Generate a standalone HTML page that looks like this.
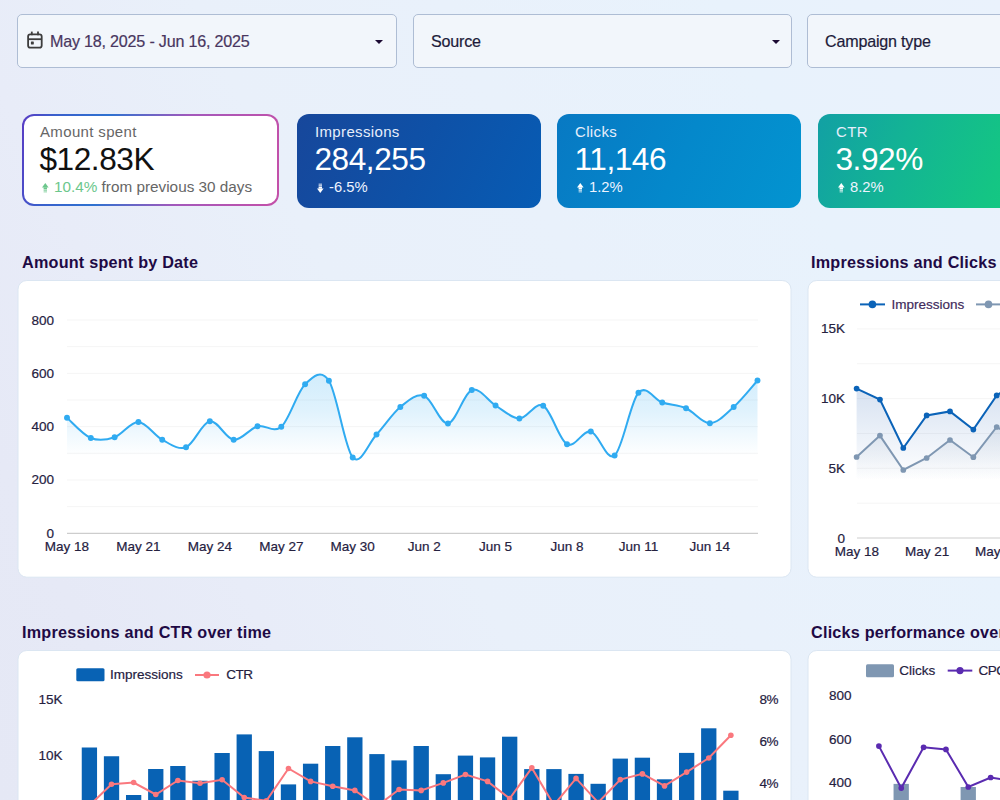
<!DOCTYPE html>
<html><head><meta charset="utf-8"><title>Dashboard</title>
<style>
*{box-sizing:border-box;margin:0;padding:0}
html,body{width:1000px;height:800px;overflow:hidden}
body{font-family:"Liberation Sans",sans-serif;position:relative;
 background:linear-gradient(64deg,#e5e8f5 0%,#e6e9f6 12%,#e8ecf8 25%,#e9f0fa 42%,#e9f1fb 60%,#e8f2fc 80%,#eaf2fc 100%);}
.abs{position:absolute}
.filter{position:absolute;top:14px;height:54px;background:#f2f6fb;border:1px solid #aebdd4;border-radius:5px;
 font-size:16.1px;letter-spacing:-.2px;color:#1d1b3a;line-height:52px;white-space:nowrap;-webkit-text-stroke:.2px}
.filter .caret{position:absolute;top:24.5px;width:0;height:0;border-left:4px solid transparent;border-right:4px solid transparent;border-top:4px solid #1c0a33}
.kpi{position:absolute;top:114px;height:93.5px;border-radius:12px;color:#fff;white-space:nowrap}
.kpi .l{position:absolute;left:18px;top:8.8px;font-size:15px;letter-spacing:.35px;line-height:18px;color:#e6eefb}
.kpi .v{position:absolute;left:17.5px;top:26px;font-size:31.6px;line-height:38px;letter-spacing:-.45px}
.kpi .d{position:absolute;left:18px;top:63.5px;font-size:14.8px;line-height:18px;color:#eef4ff}
.title{position:absolute;font-weight:bold;font-size:16.2px;letter-spacing:.22px;color:#1e0a45;white-space:nowrap;line-height:20px}
.card{position:absolute;background:#fff;border-radius:11px;border:1px solid #dbe6f2}
svg{position:absolute;left:0;top:0}
svg.ar{position:static;display:inline-block;margin:0 5.5px 0 1.5px;vertical-align:-1px}
svg text{font-family:"Liberation Sans",sans-serif;font-size:13.5px;fill:#25213f;stroke:#25213f;stroke-width:.2px}
</style></head><body>

<!-- filters -->
<div class="filter" style="left:17px;width:380px">
  <svg width="20" height="22" viewBox="0 0 20 22" style="left:8px;top:15px" fill="none" stroke="#3d3d3d" stroke-width="1.8">
    <rect x="2.1" y="4.3" width="13.6" height="13.3" rx="2.2"/><line x1="2.1" y1="9.2" x2="15.7" y2="9.2"/>
    <line x1="5.8" y1="1.6" x2="5.8" y2="5.2"/><line x1="12" y1="1.6" x2="12" y2="5.2"/><rect x="4.9" y="11.6" width="2.9" height="2.9" rx=".4" fill="#3d3d3d" stroke="none"/>
  </svg>
  <span class="abs" style="left:32px;color:#49365f">May 18, 2025 - Jun 16, 2025</span>
  <i class="caret" style="left:357px"></i>
</div>
<div class="filter" style="left:413px;width:379px"><span class="abs" style="left:17px">Source</span><i class="caret" style="left:358px"></i></div>
<div class="filter" style="left:807px;width:379px"><span class="abs" style="left:17px">Campaign type</span></div>

<!-- KPI cards -->
<div class="kpi" style="left:22px;width:257px;height:92px;background:linear-gradient(100deg,#5a3cc4 0%,#3a5fcc 12%,#2e72d0 32%,#a458bb 62%,#c450a8 100%);padding:2px">
  <div style="width:100%;height:100%;background:#fff;border-radius:10px"></div>
  <div class="l" style="color:#666">Amount spent</div>
  <div class="v" style="color:#111">$12.83K</div>
  <div class="d" style="color:#666;font-size:15.3px"><svg class="ar" width="7" height="10" viewBox="0 0 7 10"><path d="M3.3 0 L6.6 4.4 L0 4.4 Z" fill="#6cc78c"/><rect x="1.6" y="4.4" width="3.4" height="2" fill="#6cc78c"/><rect x="1.6" y="6.8" width="3.4" height="1" fill="#6cc78c" opacity=".8"/><rect x="1.6" y="8.2" width="3.4" height=".9" fill="#6cc78c" opacity=".6"/><rect x="1.6" y="9.4" width="3.4" height=".6" fill="#6cc78c" opacity=".4"/></svg><span style="color:#6cc78c">10.4%</span> from previous 30 days</div>
</div>
<div class="kpi" style="left:297px;width:244px;background:linear-gradient(115deg,#17479b 0%,#0e51a7 50%,#075cb4 100%)">
  <div class="l">Impressions</div><div class="v">284,255</div><div class="d"><svg class="ar" width="7" height="10" viewBox="0 0 7 10"><path d="M3.3 10 L6.6 5.6 L0 5.6 Z" fill="#fff"/><rect x="1.6" y="3.6" width="3.4" height="2" fill="#fff"/><rect x="1.6" y="2.2" width="3.4" height="1" fill="#fff" opacity=".85"/><rect x="1.6" y="0.9" width="3.4" height=".9" fill="#fff" opacity=".7"/><rect x="1.6" y="0" width="3.4" height=".5" fill="#fff" opacity=".5"/></svg>-6.5%</div></div>
<div class="kpi" style="left:557px;width:244px;background:linear-gradient(115deg,#0879c3 0%,#0488cb 50%,#0394d0 100%)">
  <div class="l">Clicks</div><div class="v">11,146</div><div class="d"><svg class="ar" width="7" height="10" viewBox="0 0 7 10"><path d="M3.3 0 L6.6 4.4 L0 4.4 Z" fill="#fff"/><rect x="1.6" y="4.4" width="3.4" height="2" fill="#fff"/><rect x="1.6" y="6.8" width="3.4" height="1" fill="#fff" opacity=".8"/><rect x="1.6" y="8.2" width="3.4" height=".9" fill="#fff" opacity=".6"/><rect x="1.6" y="9.4" width="3.4" height=".6" fill="#fff" opacity=".4"/></svg>1.2%</div></div>
<div class="kpi" style="left:818px;width:244px;background:linear-gradient(112deg,#12a0a4 0%,#13b494 35%,#14c584 72%,#16cf7e 100%)">
  <div class="l">CTR</div><div class="v">3.92%</div><div class="d"><svg class="ar" width="7" height="10" viewBox="0 0 7 10"><path d="M3.3 0 L6.6 4.4 L0 4.4 Z" fill="#fff"/><rect x="1.6" y="4.4" width="3.4" height="2" fill="#fff"/><rect x="1.6" y="6.8" width="3.4" height="1" fill="#fff" opacity=".8"/><rect x="1.6" y="8.2" width="3.4" height=".9" fill="#fff" opacity=".6"/><rect x="1.6" y="9.4" width="3.4" height=".6" fill="#fff" opacity=".4"/></svg>8.2%</div></div>

<!-- titles -->
<div class="title" style="left:22px;top:251.5px">Amount spent by Date</div>
<div class="title" style="left:811px;top:251.5px">Impressions and Clicks over time</div>
<div class="title" style="left:22px;top:621.5px">Impressions and CTR over time</div>
<div class="title" style="left:811px;top:621.5px">Clicks performance over time</div>

<!-- cards -->

<svg width="1000" height="800" viewBox="0 0 1000 800">
<defs>
 <linearGradient id="g1" x1="0" y1="374" x2="0" y2="456" gradientUnits="userSpaceOnUse">
  <stop offset="0" stop-color="#30abf1" stop-opacity=".22"/><stop offset=".45" stop-color="#30abf1" stop-opacity=".15"/><stop offset="1" stop-color="#30abf1" stop-opacity="0"/></linearGradient>
 <linearGradient id="g2" x1="0" y1="380" x2="0" y2="480" gradientUnits="userSpaceOnUse">
  <stop offset="0" stop-color="#2460b4" stop-opacity=".2"/><stop offset="1" stop-color="#2460b4" stop-opacity="0"/></linearGradient>
 <linearGradient id="g3" x1="0" y1="427" x2="0" y2="480" gradientUnits="userSpaceOnUse">
  <stop offset="0" stop-color="#7f97b2" stop-opacity=".16"/><stop offset="1" stop-color="#7f97b2" stop-opacity="0"/></linearGradient>
</defs>

<g fill="#fff" stroke="#dbe6f2" stroke-width="1">
<rect x="18" y="280.5" width="773" height="296.7" rx="8.8"/>
<rect x="808" y="280.5" width="773" height="296.7" rx="8.8"/>
<rect x="18" y="650.5" width="773" height="296.7" rx="8.8"/>
<rect x="808" y="650.5" width="773" height="296.7" rx="8.8"/>
</g>

<!-- chart 1 -->
<g stroke="#f5f5f5" stroke-width="1"><line x1="67" x2="758" y1="506.64" y2="506.64"/><line x1="67" x2="758" y1="479.98" y2="479.98"/><line x1="67" x2="758" y1="453.32" y2="453.32"/><line x1="67" x2="758" y1="426.66" y2="426.66"/><line x1="67" x2="758" y1="400.00" y2="400.00"/><line x1="67" x2="758" y1="373.34" y2="373.34"/><line x1="67" x2="758" y1="346.68" y2="346.68"/><line x1="67" x2="758" y1="320.02" y2="320.02"/></g>
<line x1="67" x2="758" y1="533.3" y2="533.3" stroke="#cdcdcd" stroke-width="1.2"/>
<path d="M67.00,417.75 C70.97,421.12 82.87,434.75 90.81,438.00 C98.75,441.25 106.68,439.92 114.62,437.25 C122.56,434.58 130.49,421.58 138.43,422.00 C146.37,422.42 154.30,435.54 162.24,439.75 C170.18,443.96 178.11,450.33 186.05,447.25 C193.99,444.17 201.92,422.50 209.86,421.25 C217.80,420.00 225.73,438.92 233.67,439.75 C241.61,440.58 249.54,428.42 257.48,426.25 C265.42,424.08 273.35,433.75 281.29,426.75 C289.23,419.75 297.16,391.92 305.10,384.25 C313.04,376.58 320.97,368.54 328.91,380.75 C336.85,392.96 344.78,448.54 352.72,457.50 C360.66,466.46 368.59,442.92 376.53,434.50 C384.47,426.08 392.40,413.46 400.34,407.00 C408.28,400.54 416.21,393.00 424.15,395.75 C432.09,398.50 440.02,424.46 447.96,423.50 C455.90,422.54 463.83,393.00 471.77,390.00 C479.71,387.00 487.64,400.75 495.58,405.50 C503.52,410.25 511.45,418.46 519.39,418.50 C527.33,418.54 535.26,401.46 543.20,405.75 C551.14,410.04 559.07,439.96 567.01,444.25 C574.95,448.54 582.88,429.62 590.82,431.50 C598.76,433.38 606.69,461.96 614.63,455.50 C622.57,449.04 630.50,401.58 638.44,392.75 C646.38,383.92 654.31,399.92 662.25,402.50 C670.19,405.08 678.12,404.79 686.06,408.25 C694.00,411.71 701.93,423.46 709.87,423.25 C717.81,423.04 725.74,414.12 733.68,407.00 C741.62,399.88 753.52,384.92 757.49,380.50 L757.49,456 L67.00,456 Z" fill="url(#g1)"/>
<path d="M67.00,417.75 C70.97,421.12 82.87,434.75 90.81,438.00 C98.75,441.25 106.68,439.92 114.62,437.25 C122.56,434.58 130.49,421.58 138.43,422.00 C146.37,422.42 154.30,435.54 162.24,439.75 C170.18,443.96 178.11,450.33 186.05,447.25 C193.99,444.17 201.92,422.50 209.86,421.25 C217.80,420.00 225.73,438.92 233.67,439.75 C241.61,440.58 249.54,428.42 257.48,426.25 C265.42,424.08 273.35,433.75 281.29,426.75 C289.23,419.75 297.16,391.92 305.10,384.25 C313.04,376.58 320.97,368.54 328.91,380.75 C336.85,392.96 344.78,448.54 352.72,457.50 C360.66,466.46 368.59,442.92 376.53,434.50 C384.47,426.08 392.40,413.46 400.34,407.00 C408.28,400.54 416.21,393.00 424.15,395.75 C432.09,398.50 440.02,424.46 447.96,423.50 C455.90,422.54 463.83,393.00 471.77,390.00 C479.71,387.00 487.64,400.75 495.58,405.50 C503.52,410.25 511.45,418.46 519.39,418.50 C527.33,418.54 535.26,401.46 543.20,405.75 C551.14,410.04 559.07,439.96 567.01,444.25 C574.95,448.54 582.88,429.62 590.82,431.50 C598.76,433.38 606.69,461.96 614.63,455.50 C622.57,449.04 630.50,401.58 638.44,392.75 C646.38,383.92 654.31,399.92 662.25,402.50 C670.19,405.08 678.12,404.79 686.06,408.25 C694.00,411.71 701.93,423.46 709.87,423.25 C717.81,423.04 725.74,414.12 733.68,407.00 C741.62,399.88 753.52,384.92 757.49,380.50" fill="none" stroke="#30abf1" stroke-width="2" stroke-linejoin="round"/>
<g fill="#30abf1"><circle cx="67.00" cy="417.75" r="2.95"/><circle cx="90.81" cy="438.00" r="2.95"/><circle cx="114.62" cy="437.25" r="2.95"/><circle cx="138.43" cy="422.00" r="2.95"/><circle cx="162.24" cy="439.75" r="2.95"/><circle cx="186.05" cy="447.25" r="2.95"/><circle cx="209.86" cy="421.25" r="2.95"/><circle cx="233.67" cy="439.75" r="2.95"/><circle cx="257.48" cy="426.25" r="2.95"/><circle cx="281.29" cy="426.75" r="2.95"/><circle cx="305.10" cy="384.25" r="2.95"/><circle cx="328.91" cy="380.75" r="2.95"/><circle cx="352.72" cy="457.50" r="2.95"/><circle cx="376.53" cy="434.50" r="2.95"/><circle cx="400.34" cy="407.00" r="2.95"/><circle cx="424.15" cy="395.75" r="2.95"/><circle cx="447.96" cy="423.50" r="2.95"/><circle cx="471.77" cy="390.00" r="2.95"/><circle cx="495.58" cy="405.50" r="2.95"/><circle cx="519.39" cy="418.50" r="2.95"/><circle cx="543.20" cy="405.75" r="2.95"/><circle cx="567.01" cy="444.25" r="2.95"/><circle cx="590.82" cy="431.50" r="2.95"/><circle cx="614.63" cy="455.50" r="2.95"/><circle cx="638.44" cy="392.75" r="2.95"/><circle cx="662.25" cy="402.50" r="2.95"/><circle cx="686.06" cy="408.25" r="2.95"/><circle cx="709.87" cy="423.25" r="2.95"/><circle cx="733.68" cy="407.00" r="2.95"/><circle cx="757.49" cy="380.50" r="2.95"/></g>
<text x="54" y="537.80" text-anchor="end">0</text><text x="54" y="484.48" text-anchor="end">200</text><text x="54" y="431.16" text-anchor="end">400</text><text x="54" y="377.84" text-anchor="end">600</text><text x="54" y="324.52" text-anchor="end">800</text><text x="67.00" y="551.2" text-anchor="middle">May 18</text><text x="138.43" y="551.2" text-anchor="middle">May 21</text><text x="209.86" y="551.2" text-anchor="middle">May 24</text><text x="281.29" y="551.2" text-anchor="middle">May 27</text><text x="352.72" y="551.2" text-anchor="middle">May 30</text><text x="424.15" y="551.2" text-anchor="middle">Jun 2</text><text x="495.58" y="551.2" text-anchor="middle">Jun 5</text><text x="567.01" y="551.2" text-anchor="middle">Jun 8</text><text x="638.44" y="551.2" text-anchor="middle">Jun 11</text><text x="709.87" y="551.2" text-anchor="middle">Jun 14</text>

<!-- chart 2 -->
<g stroke="#f5f5f5" stroke-width="1"><line x1="857" x2="1000" y1="503.15" y2="503.15"/><line x1="857" x2="1000" y1="468.30" y2="468.30"/><line x1="857" x2="1000" y1="433.45" y2="433.45"/><line x1="857" x2="1000" y1="398.60" y2="398.60"/><line x1="857" x2="1000" y1="363.75" y2="363.75"/><line x1="857" x2="1000" y1="328.90" y2="328.90"/></g>
<line x1="857" x2="1000" y1="538" y2="538" stroke="#cdcdcd" stroke-width="1.2"/>
<path d="M856.60,388.60 L879.95,399.60 L903.30,448.00 L926.65,415.40 L950.00,411.40 L973.35,429.60 L996.70,395.40 L1020.05,380.00 L1020.05,480 L856.60,480 Z" fill="url(#g2)"/>
<path d="M856.60,457.00 L879.95,435.60 L903.30,470.00 L926.65,458.00 L950.00,440.00 L973.35,457.20 L996.70,427.00 L1020.05,440.00 L1020.05,480 L856.60,480 Z" fill="url(#g3)"/>
<path d="M856.60,457.00 L879.95,435.60 L903.30,470.00 L926.65,458.00 L950.00,440.00 L973.35,457.20 L996.70,427.00 L1020.05,440.00" fill="none" stroke="#7f97b2" stroke-width="2"/>
<g fill="#7f97b2"><circle cx="856.60" cy="457.00" r="2.85"/><circle cx="879.95" cy="435.60" r="2.85"/><circle cx="903.30" cy="470.00" r="2.85"/><circle cx="926.65" cy="458.00" r="2.85"/><circle cx="950.00" cy="440.00" r="2.85"/><circle cx="973.35" cy="457.20" r="2.85"/><circle cx="996.70" cy="427.00" r="2.85"/><circle cx="1020.05" cy="440.00" r="2.85"/></g>
<path d="M856.60,388.60 L879.95,399.60 L903.30,448.00 L926.65,415.40 L950.00,411.40 L973.35,429.60 L996.70,395.40 L1020.05,380.00" fill="none" stroke="#0b63b8" stroke-width="2"/>
<g fill="#0b63b8"><circle cx="856.60" cy="388.60" r="2.85"/><circle cx="879.95" cy="399.60" r="2.85"/><circle cx="903.30" cy="448.00" r="2.85"/><circle cx="926.65" cy="415.40" r="2.85"/><circle cx="950.00" cy="411.40" r="2.85"/><circle cx="973.35" cy="429.60" r="2.85"/><circle cx="996.70" cy="395.40" r="2.85"/><circle cx="1020.05" cy="380.00" r="2.85"/></g>
<text x="845" y="542.50" text-anchor="end">0</text><text x="845" y="472.80" text-anchor="end">5K</text><text x="845" y="403.10" text-anchor="end">10K</text><text x="845" y="333.40" text-anchor="end">15K</text><text x="857.00" y="555.8" text-anchor="middle">May 18</text><text x="927.05" y="555.8" text-anchor="middle">May 21</text><text x="997.10" y="555.8" text-anchor="middle">May 24</text>
<line x1="860" x2="885" y1="304.4" y2="304.4" stroke="#0b63b8" stroke-width="2"/><circle cx="872.4" cy="304.4" r="3.8" fill="#0b63b8"/>
<text x="891.5" y="309" style="fill:#3f2b5c;stroke:#3f2b5c">Impressions</text>
<line x1="976" x2="1001" y1="304.4" y2="304.4" stroke="#7f97b2" stroke-width="2"/><circle cx="988.5" cy="304.4" r="3.8" fill="#7f97b2"/>

<!-- chart 3 -->
<g fill="#0862b4"><rect x="81.75" y="747.50" width="15.3" height="62.50"/><rect x="103.87" y="756.25" width="15.3" height="53.75"/><rect x="125.99" y="795.00" width="15.3" height="15.00"/><rect x="148.11" y="769.00" width="15.3" height="41.00"/><rect x="170.23" y="766.00" width="15.3" height="44.00"/><rect x="192.35" y="780.75" width="15.3" height="29.25"/><rect x="214.47" y="753.00" width="15.3" height="57.00"/><rect x="236.59" y="734.40" width="15.3" height="75.60"/><rect x="258.71" y="751.10" width="15.3" height="58.90"/><rect x="280.83" y="784.40" width="15.3" height="25.60"/><rect x="302.95" y="763.70" width="15.3" height="46.30"/><rect x="325.07" y="746.00" width="15.3" height="64.00"/><rect x="347.19" y="737.30" width="15.3" height="72.70"/><rect x="369.31" y="754.10" width="15.3" height="55.90"/><rect x="391.43" y="760.40" width="15.3" height="49.60"/><rect x="413.55" y="746.00" width="15.3" height="64.00"/><rect x="435.67" y="774.20" width="15.3" height="35.80"/><rect x="457.79" y="755.60" width="15.3" height="54.40"/><rect x="479.91" y="757.40" width="15.3" height="52.60"/><rect x="502.03" y="736.70" width="15.3" height="73.30"/><rect x="524.15" y="769.10" width="15.3" height="40.90"/><rect x="546.27" y="769.10" width="15.3" height="40.90"/><rect x="568.39" y="773.90" width="15.3" height="36.10"/><rect x="590.51" y="783.80" width="15.3" height="26.20"/><rect x="612.63" y="758.60" width="15.3" height="51.40"/><rect x="634.75" y="757.70" width="15.3" height="52.30"/><rect x="656.87" y="779.30" width="15.3" height="30.70"/><rect x="678.99" y="752.90" width="15.3" height="57.10"/><rect x="701.11" y="728.30" width="15.3" height="81.70"/><rect x="723.23" y="790.70" width="15.3" height="19.30"/></g>
<path d="M89.40,805.50 L111.52,784.25 L133.64,782.50 L155.76,794.50 L177.88,780.50 L200.00,783.25 L222.12,779.75 L244.24,797.50 L266.36,800.80 L288.48,768.50 L310.60,781.40 L332.72,786.20 L354.84,790.40 L376.96,806.00 L399.08,789.50 L421.20,790.40 L443.32,782.90 L465.44,774.50 L487.56,781.40 L509.68,798.50 L531.80,767.90 L553.92,805.00 L576.04,778.40 L598.16,802.50 L620.28,779.60 L642.40,773.90 L664.52,785.90 L686.64,772.10 L708.76,758.00 L730.88,735.20" fill="none" stroke="#fa787e" stroke-width="2"/>
<g fill="#fa787e"><circle cx="89.40" cy="805.50" r="2.8"/><circle cx="111.52" cy="784.25" r="2.8"/><circle cx="133.64" cy="782.50" r="2.8"/><circle cx="155.76" cy="794.50" r="2.8"/><circle cx="177.88" cy="780.50" r="2.8"/><circle cx="200.00" cy="783.25" r="2.8"/><circle cx="222.12" cy="779.75" r="2.8"/><circle cx="244.24" cy="797.50" r="2.8"/><circle cx="266.36" cy="800.80" r="2.8"/><circle cx="288.48" cy="768.50" r="2.8"/><circle cx="310.60" cy="781.40" r="2.8"/><circle cx="332.72" cy="786.20" r="2.8"/><circle cx="354.84" cy="790.40" r="2.8"/><circle cx="376.96" cy="806.00" r="2.8"/><circle cx="399.08" cy="789.50" r="2.8"/><circle cx="421.20" cy="790.40" r="2.8"/><circle cx="443.32" cy="782.90" r="2.8"/><circle cx="465.44" cy="774.50" r="2.8"/><circle cx="487.56" cy="781.40" r="2.8"/><circle cx="509.68" cy="798.50" r="2.8"/><circle cx="531.80" cy="767.90" r="2.8"/><circle cx="553.92" cy="805.00" r="2.8"/><circle cx="576.04" cy="778.40" r="2.8"/><circle cx="598.16" cy="802.50" r="2.8"/><circle cx="620.28" cy="779.60" r="2.8"/><circle cx="642.40" cy="773.90" r="2.8"/><circle cx="664.52" cy="785.90" r="2.8"/><circle cx="686.64" cy="772.10" r="2.8"/><circle cx="708.76" cy="758.00" r="2.8"/><circle cx="730.88" cy="735.20" r="2.8"/></g>
<rect x="76.3" y="668.3" width="28.2" height="13" rx="1.5" fill="#0862b4"/>
<text x="110" y="678.8">Impressions</text>
<line x1="195" x2="219" y1="675" y2="675" stroke="#fa787e" stroke-width="2"/><circle cx="207" cy="675" r="3.6" fill="#fa787e"/>
<text x="226.3" y="678.8" letter-spacing="-.5">CTR</text>
<text x="62.5" y="704" text-anchor="end">15K</text><text x="62.5" y="760" text-anchor="end">10K</text>
<text x="759.5" y="703.7" letter-spacing="-.4">8%</text><text x="759.5" y="745.7" letter-spacing="-.4">6%</text><text x="759.5" y="787.7" letter-spacing="-.4">4%</text>

<!-- chart 4 -->
<g fill="#7f97b2"><rect x="893.55" y="783.90" width="15.3" height="40"/><rect x="960.60" y="787.00" width="15.3" height="40"/></g>
<path d="M878.90,746.10 L901.25,788.10 L923.60,747.30 L945.95,749.40 L968.30,787.00 L990.65,777.50 L1013.00,781.00" fill="none" stroke="#5a2bb0" stroke-width="2"/>
<g fill="#5a2bb0"><circle cx="878.90" cy="746.10" r="2.85"/><circle cx="901.25" cy="788.10" r="2.85"/><circle cx="923.60" cy="747.30" r="2.85"/><circle cx="945.95" cy="749.40" r="2.85"/><circle cx="968.30" cy="787.00" r="2.85"/><circle cx="990.65" cy="777.50" r="2.85"/><circle cx="1013.00" cy="781.00" r="2.85"/></g>
<rect x="866" y="664.2" width="28" height="13" rx="1.5" fill="#7f97b2"/>
<text x="899.3" y="675">Clicks</text>
<line x1="947.7" x2="972.3" y1="670.6" y2="670.6" stroke="#5a2bb0" stroke-width="2"/><circle cx="960" cy="670.6" r="3.6" fill="#5a2bb0"/>
<text x="978.6" y="675" letter-spacing="-.5">CPC</text>
<text x="851.5" y="700" text-anchor="end">800</text><text x="851.5" y="744" text-anchor="end">600</text><text x="851.5" y="786.7" text-anchor="end">400</text>
</svg>
</body></html>
